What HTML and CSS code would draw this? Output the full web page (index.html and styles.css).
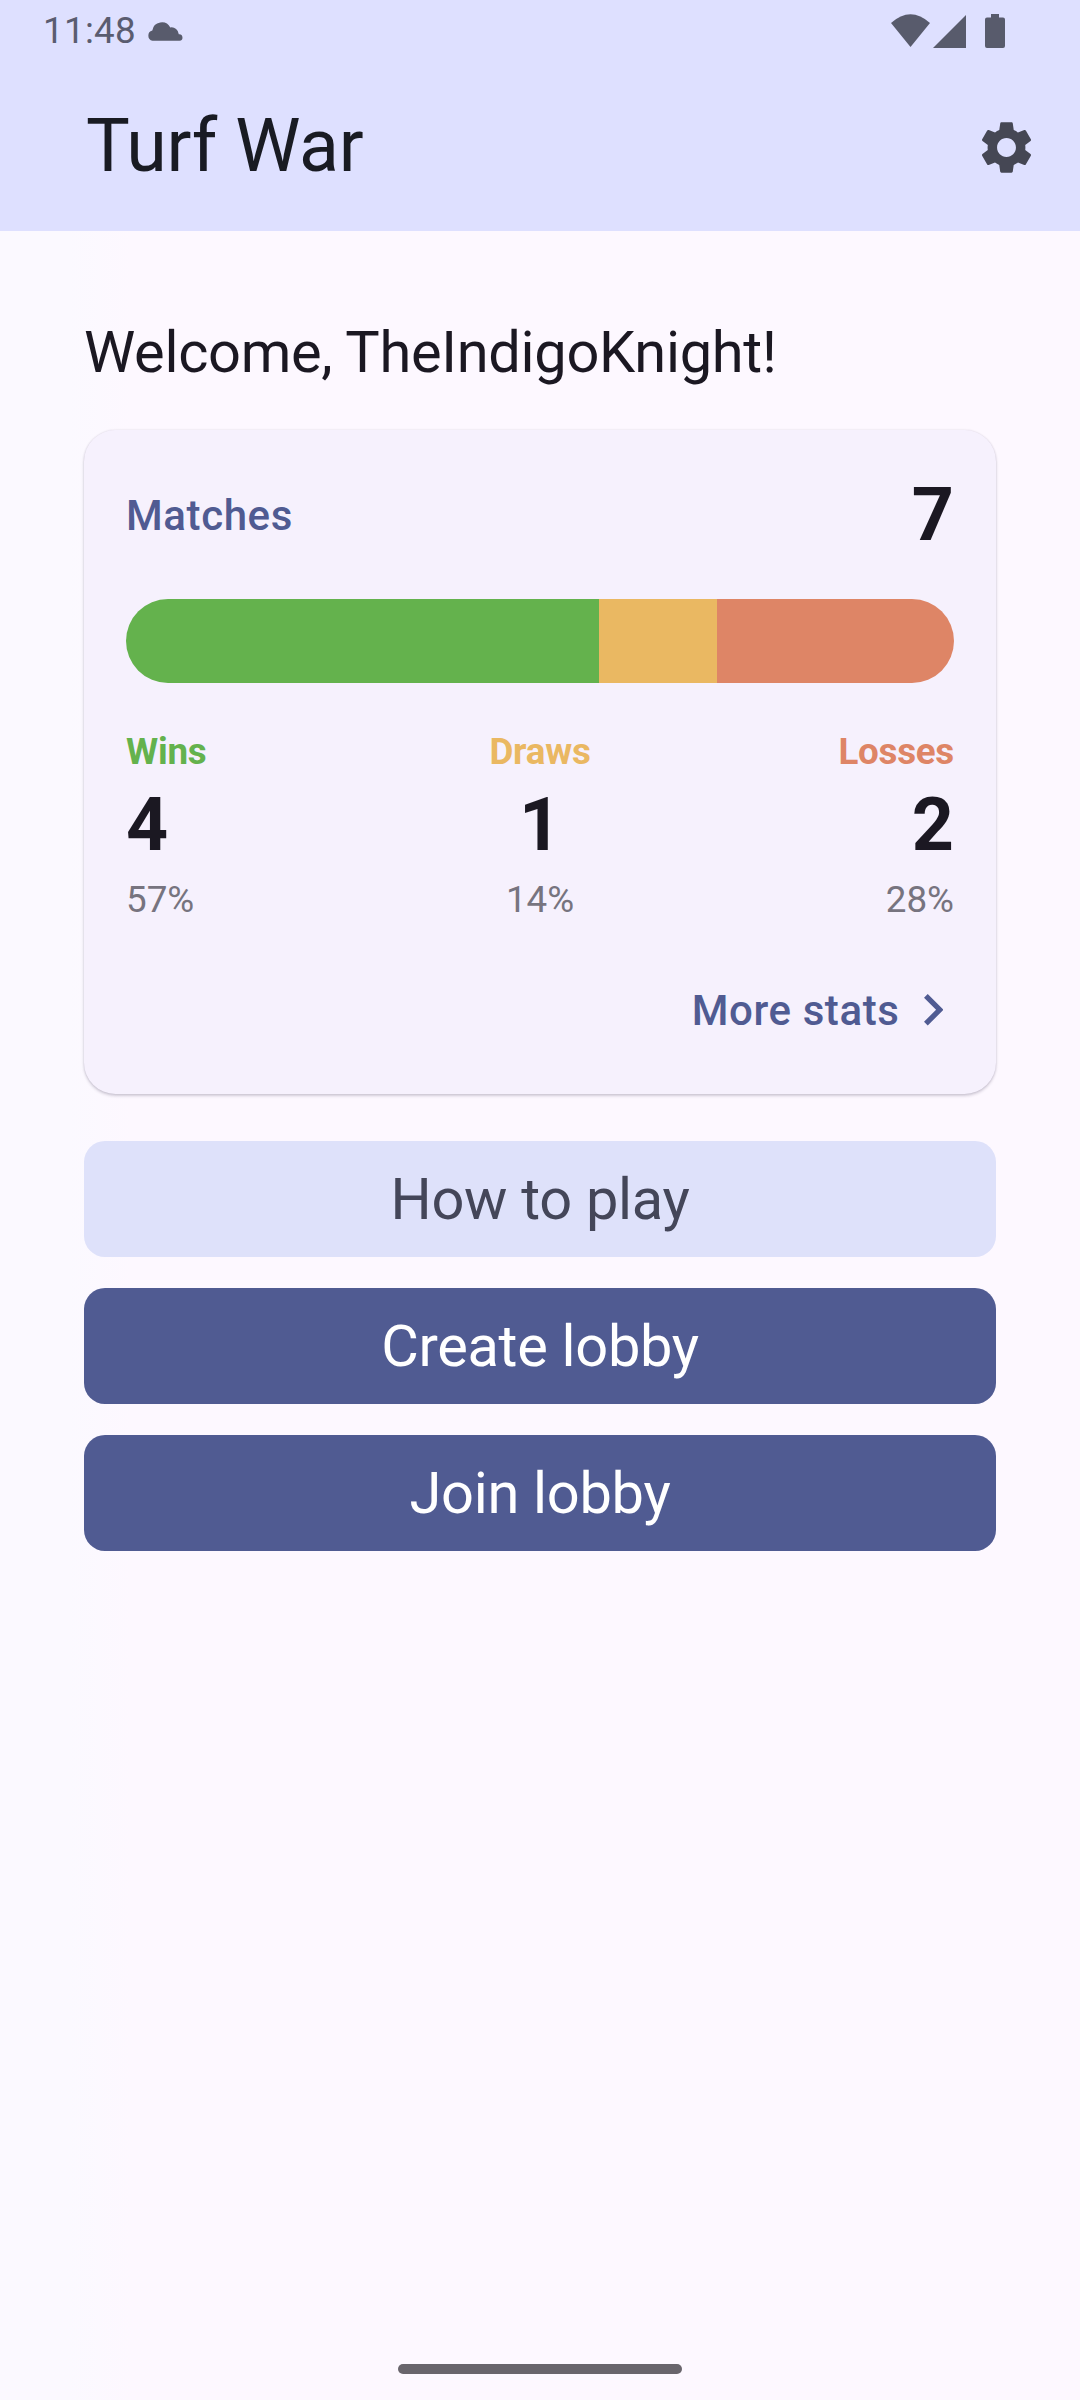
FILE: index.html
```html
<!DOCTYPE html>
<html lang="en">
<head>
<meta charset="utf-8">
<title>Turf War</title>
<link rel="stylesheet" href="styles.css">
</head>
<body>
<div class="screen">
  <header class="header">
    <div class="status">
      <span class="clock">11:48</span>
      <svg class="cloud" viewBox="0 0 36 20"><path d="M5.500 19.800A5.300 5.300 0 0 1 5.300 9.500A9.600 9.600 0 0 1 23.300 6.500A7.200 7.200 0 0 1 31.800 13.200A3.300 3.300 0 0 1 32.500 19.800Z"/></svg>
      <svg class="wifi" viewBox="0 0 39 33"><path d="M0 9Q19.500 -8.500 39 9L19.500 33Z"/></svg>
      <svg class="signal" viewBox="0 0 33 33"><path d="M33 0V33H0Z"/></svg>
      <svg class="battery" viewBox="0 0 20 34"><path d="M6 0H14V3.500H18Q20 3.500 20 5.500V32Q20 34 18 34H2Q0 34 0 32V5.500Q0 3.500 2 3.500H6Z"/></svg>
    </div>
    <div class="appbar">
      <h1 class="title">Turf War</h1>
      <svg class="gear" viewBox="0 0 24 24"><path d="M19.14 12.94c.04-.3.06-.61.06-.94 0-.32-.02-.64-.07-.94l2.030-1.580c.18-.14.23-.41.12-.61l-1.920-3.320c-.12-.22-.37-.29-.59-.22l-2.390.96c-.5-.38-1.030-.7-1.620-.94l-.36-2.540c-.04-.24-.24-.41-.48-.41h-3.840c-.24 0-.43.17-.47.41l-.36 2.540c-.59.24-1.130.57-1.620.94l-2.390-.96c-.22-.08-.47 0-.59.22L2.740 8.870c-.12.21-.08.47.12.61l2.030 1.580c-.05.3-.09.63-.09.94s.02.64.07.94l-2.030 1.580c-.18.14-.23.41-.12.61l1.920 3.320c.12.22.37.29.59.22l2.390-.96c.5.38 1.030.7 1.620.94l.36 2.540c.05.24.24.41.48.41h3.840c.24 0 .44-.17.47-.41l.36-2.540c.59-.24 1.130-.56 1.620-.94l2.390.96c.22.08.47 0 .59-.22l1.920-3.320c.12-.22.07-.47-.12-.61l-2.010-1.580zM12 15.600c-1.980 0-3.600-1.620-3.600-3.600s1.620-3.600 3.600-3.600 3.600 1.620 3.600 3.600-1.620 3.600-3.600 3.600z"/></svg>
    </div>
  </header>
  <main class="content">
    <h2 class="welcome">Welcome, TheIndigoKnight!</h2>
    <section class="card">
      <div class="matches">
        <span class="label">Matches</span>
        <span class="number">7</span>
      </div>
      <div class="bar">
        <div class="win" style="flex-grow:4"></div>
        <div class="draw" style="flex-grow:1"></div>
        <div class="loss" style="flex-grow:2"></div>
      </div>
      <div class="stats">
        <div class="stat">
          <span class="name win-text">Wins</span><span class="number">4</span><span class="percent">57%</span>
        </div>
        <div class="stat middle">
          <span class="name draw-text">Draws</span><span class="number">1</span><span class="percent">14%</span>
        </div>
        <div class="stat end">
          <span class="name loss-text">Losses</span><span class="number">2</span><span class="percent">28%</span>
        </div>
      </div>
      <a class="more"><span class="label">More stats</span><svg class="chevron" viewBox="8.590 6 7.410 12"><path d="M10 6L8.590 7.410 13.170 12l-4.580 4.590L10 18l6-6z"/></svg></a>
    </section>
    <div class="actions">
      <button class="button tonal">How to play</button>
      <button class="button">Create lobby</button>
      <button class="button">Join lobby</button>
    </div>
  </main>
  <div class="home"></div>
</div>
</body>
</html>
```
FILE: styles.css
```css
* { box-sizing: border-box; }
body { margin: 0; font-family: Roboto, sans-serif; background: #fcf8ff; color: #1b1822; }
svg { display: block; flex: none; }
h1, h2 { margin: 0; font-weight: 400; }
.screen { width: 1080px; height: 2400px; display: flex; flex-direction: column; background: linear-gradient(90deg, #fbf9ff 0, #fbf9ff 70px, #fdf8ff 130px); }
.header { height: 231px; background: #dee0ff; }
.status { height: 63px; padding: 0 75px 0 43px; display: flex; align-items: center; color: #5a5c70; fill: #585b6c; }
.clock { font-size: 36.750px; line-height: 62px; letter-spacing: .300px; padding-bottom: 1px; }
.cloud { width: 36px; height: 20px; margin: -2px auto 0 11px; }
.wifi { width: 39px; height: 33px; margin: -2px 3px 0 0; }
.signal { width: 33px; height: 33px; margin: -1px 19px 0 0; }
.battery { width: 20px; height: 34px; margin-top: -1px; }
.appbar { height: 168px; padding: 0 42px 0 86px; display: flex; align-items: center; justify-content: space-between; }
.title { font-size: 73.500px; line-height: 94px; letter-spacing: -.200px; padding-bottom: 2px; color: #191b23; }
.gear { width: 63px; height: 63px; fill: #454754; }
.content { flex: 1; padding: 84px 84px 0; }
.welcome { font-size: 57.750px; line-height: 74px; letter-spacing: -.300px; margin-bottom: 41px; }
.card { height: 664px; padding: 42px; border-radius: 31.500px; background: #f6f1fd; box-shadow: 0 2px 3px rgba(60, 50, 80, .22), 0 0 2px rgba(60, 50, 80, .16); }
.matches { height: 86px; margin-bottom: 41px; display: flex; align-items: center; justify-content: space-between; }
.label { font-size: 42px; font-weight: 500; letter-spacing: .600px; line-height: 63px; color: #505b92; }
.number { font-size: 73.500px; font-weight: 700; line-height: 94.500px; }
.bar { height: 84px; border-radius: 42px; overflow: hidden; display: flex; }
.bar > div { flex-basis: 0; }
.win { background: #64b24d; }
.draw { background: #eab862; }
.loss { background: #de8566; }
.win-text { color: #64b24d; }
.draw-text { color: #eab862; }
.loss-text { color: #de8566; }
.stats { margin-top: 43px; display: grid; grid-template-columns: repeat(3, 1fr); }
.stat { display: flex; flex-direction: column; }
.middle { align-items: center; }
.end { align-items: flex-end; }
.name { font-size: 36.750px; font-weight: 700; letter-spacing: -.250px; line-height: 52px; }
.percent { font-size: 36.750px; font-weight: 450; line-height: 53px; color: #77747f; }
.more { margin-top: 53px; padding-right: 11px; display: flex; align-items: center; justify-content: flex-end; gap: 24px; }
.chevron { width: 19.500px; height: 31.500px; fill: #505b92; }
.actions { margin-top: 47px; display: flex; flex-direction: column; gap: 31px; }
.button { height: 116px; padding: 0; border: 0; border-radius: 21px; background: #505b92; color: #fff; font: 400 57.750px/74px Roboto, sans-serif; letter-spacing: -.300px; }
.tonal { background: #dee1fa; color: #444659; }
.home { width: 284px; height: 10px; margin: 0 auto 26px; border-radius: 5px; background: #69656c; }
```
